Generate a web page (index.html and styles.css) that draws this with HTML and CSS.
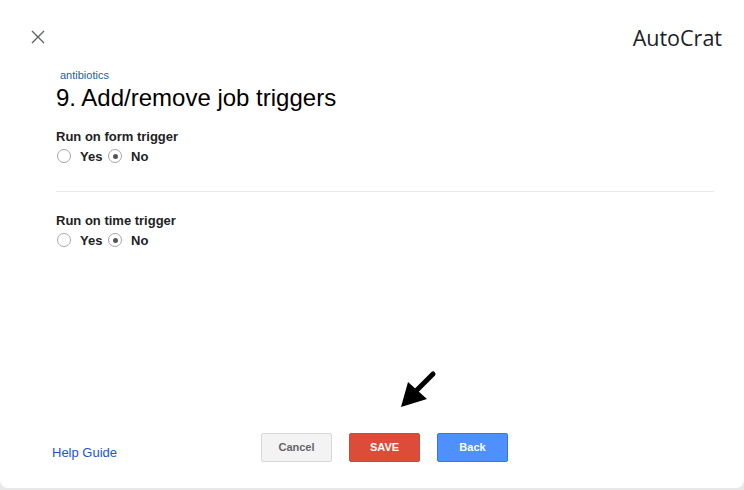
FILE: index.html
```html
<!DOCTYPE html>
<html>
<head>
<meta charset="utf-8">
<link rel="stylesheet" href="styles.css">
</head>
<body>
<div class="dialog">
  <header class="top">
    <svg class="close" width="14" height="14" viewBox="0 0 14 14"><path d="M1 1 L13 13 M13 1 L1 13" stroke="#5f6368" stroke-width="1.4" fill="none"/></svg>
    <div class="brand">AutoCrat</div>
  </header>
  <main class="content">
    <div class="job">antibiotics</div>
    <h1 class="title">9. Add/remove job triggers</h1>
    <section class="group">
      <div class="label">Run on form trigger</div>
      <div class="radios">
        <span class="radio"></span><span class="opt">Yes</span>
        <span class="radio on"></span><span class="opt">No</span>
      </div>
    </section>
    <hr class="divider">
    <section class="group second">
      <div class="label">Run on time trigger</div>
      <div class="radios">
        <span class="radio"></span><span class="opt">Yes</span>
        <span class="radio on"></span><span class="opt">No</span>
      </div>
    </section>
  </main>
  <footer class="foot">
    <a class="help">Help Guide</a>
    <div class="buttons">
      <button class="btn cancel">Cancel</button>
      <button class="btn save">SAVE</button>
      <button class="btn back">Back</button>
    </div>
  </footer>
  <svg class="arrow" width="50" height="50" viewBox="0 0 50 50"><path d="M41 4 L22 23" stroke="#000" stroke-width="5" stroke-linecap="round"/><path d="M9 37 L16 12 L35 29 Z" fill="#000"/></svg>
</div>
</body>
</html>
```
FILE: styles.css
```css
html, body { margin: 0; padding: 0; }
body { background: #e8e8e8; width: 744px; height: 490px; overflow: hidden; font-family: "Liberation Sans", Arial, sans-serif; }
.dialog { position: relative; background: #fff; height: 488px; border-radius: 0 0 8px 8px; display: flex; flex-direction: column; box-sizing: border-box; }
.top { display: flex; justify-content: space-between; align-items: center; height: 74px; padding: 0 22px 0 31px; box-sizing: border-box; }
.close { display: block; }
.brand { font-family: "Open Sans", sans-serif; font-size: 21.5px; color: #202124; }
.content { padding: 0 30px 0 56px; flex: 1; margin-top: -5px; }
.job { font-size: 11px; color: #1f5f8e; padding-left: 4px; line-height: 13px; }
.title { font-size: 24px; font-weight: normal; margin: 0; color: #000; line-height: 28px; margin-top: 2px; }
.group { margin-top: 17px; }
.group.second { margin-top: 21px; }
.label { font-size: 13px; font-weight: bold; color: #222; line-height: 16px; margin-top: 9px; }
.radios { display: flex; align-items: center; height: 20px; margin-top: 1px; }
.radio { width: 14px; height: 14px; border: 1px solid #a6a6a6; border-radius: 50%; box-sizing: border-box; position: relative; margin-left: 1px; }
.radio.on::after { content: ""; position: absolute; left: 3.5px; top: 3.5px; width: 5px; height: 5px; border-radius: 50%; background: #555; }
.opt { font-size: 13px; font-weight: bold; color: #222; margin: 0 0 0 9px; width: 27px; }
.opt:last-child { width: auto; }
.divider { border: 0; border-top: 1px solid #e8e8e8; margin: 25px 0 0 0; }
.foot { display: flex; align-items: center; height: 60px; padding: 0 0 0 52px; position: relative; margin-bottom: 11px; }
.help { color: #1a55d0; font-size: 13px; width: 209px; margin-top: 11px; }
.buttons { display: flex; gap: 17px; }
.btn { width: 71px; height: 29px; border-radius: 2px; font-family: "Liberation Sans", Arial, sans-serif; font-size: 11px; font-weight: bold; border: 1px solid; padding: 0; }
.cancel { background: #f3f3f3; border-color: #d9d9d9; color: #666; }
.save { background: #dd4b39; border-color: #d14836; color: #fff; }
.back { background: #4d90fe; border-color: #3079ed; color: #fff; }
.arrow { position: absolute; left: 392px; top: 370px; }
```
